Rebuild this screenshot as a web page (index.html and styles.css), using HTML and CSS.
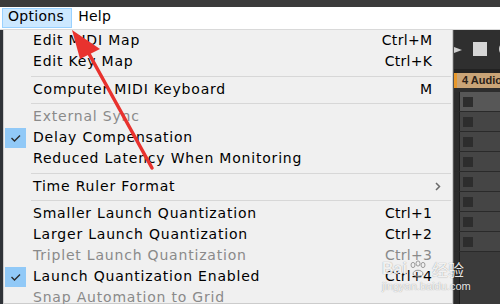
FILE: index.html
```html
<!DOCTYPE html>
<html>
<head>
<meta charset="utf-8">
<link rel="stylesheet" href="styles.css">
</head>
<body>
<div class="topstrip"></div>
<div class="menubar">
  <span class="mb-item active">Options</span>
  <span class="mb-item">Help</span>
</div>
<div class="workspace">
  <div class="leftedge"></div>
  <div class="menu">
    <div class="item"><span class="chk"></span><span class="label">Edit MIDI Map</span><span class="sc">Ctrl+M</span></div>
    <div class="item"><span class="chk"></span><span class="label">Edit Key Map</span><span class="sc">Ctrl+K</span></div>
    <div class="sep"></div>
    <div class="item"><span class="chk"></span><span class="label">Computer MIDI Keyboard</span><span class="sc">M</span></div>
    <div class="sep"></div>
    <div class="item disabled"><span class="chk"></span><span class="label">External Sync</span></div>
    <div class="item checked"><span class="chk"><svg viewBox="0 0 21 20" width="21" height="20"><path d="M6.5 10 L9.5 13 L15 7.5" fill="none" stroke="#2b2b2b" stroke-width="1.4"/></svg></span><span class="label">Delay Compensation</span></div>
    <div class="item"><span class="chk"></span><span class="label">Reduced Latency When Monitoring</span></div>
    <div class="sep"></div>
    <div class="item"><span class="chk"></span><span class="label">Time Ruler Format</span><svg class="sub" viewBox="0 0 6 9" width="6" height="9"><path d="M1 1 L4.5 4.5 L1 8" fill="none" stroke="#6a6a6a" stroke-width="1.5"/></svg></div>
    <div class="sep"></div>
    <div class="item"><span class="chk"></span><span class="label">Smaller Launch Quantization</span><span class="sc">Ctrl+1</span></div>
    <div class="item"><span class="chk"></span><span class="label">Larger Launch Quantization</span><span class="sc">Ctrl+2</span></div>
    <div class="item disabled"><span class="chk"></span><span class="label">Triplet Launch Quantization</span><span class="sc">Ctrl+3</span></div>
    <div class="item checked"><span class="chk"><svg viewBox="0 0 21 20" width="21" height="20"><path d="M6.5 10 L9.5 13 L15 7.5" fill="none" stroke="#2b2b2b" stroke-width="1.4"/></svg></span><span class="label">Launch Quantization Enabled</span><span class="sc">Ctrl+4</span></div>
    <div class="item disabled"><span class="chk"></span><span class="label">Snap Automation to Grid</span></div>
  </div>
  <div class="daw">
    <div class="transport">
      <svg viewBox="0 0 47 39" width="47" height="39">
        <polygon points="-4,15 9,20 -4,25" fill="#cfcfcf"/>
        <rect x="20" y="12" width="14" height="14" fill="#d6d6d6"/>
        <circle cx="53" cy="19" r="7" fill="#d0d0d0"/>
      </svg>
    </div>
    <div class="band"></div>
    <div class="trackhead">4 Audio</div>
    <div class="gap"></div>
    <div class="trow first"><div class="tl"></div><div class="tcell"><div class="sq"></div></div></div>
    <div class="trow"><div class="tl"></div><div class="tcell"><div class="sq"></div></div></div>
    <div class="trow"><div class="tl"></div><div class="tcell"><div class="sq"></div></div></div>
    <div class="trow"><div class="tl"></div><div class="tcell"><div class="sq"></div></div></div>
    <div class="trow"><div class="tl"></div><div class="tcell"><div class="sq"></div></div></div>
    <div class="trow"><div class="tl"></div><div class="tcell"><div class="sq"></div></div></div>
    <div class="trow"><div class="tl"></div><div class="tcell"><div class="sq"></div></div></div>
    <div class="trow"><div class="tl"></div><div class="tcell"><div class="sq"></div></div></div>
    <div class="rest"><div class="tl"></div><div class="restcell"></div></div>
  </div>
</div>
<svg class="arrow" viewBox="0 0 500 304" width="500" height="304">
  <line x1="152" y1="168" x2="88" y2="52" stroke="#e8322e" stroke-width="3.5" stroke-linecap="round"/>
  <polygon points="72,30 100,49 80,59" fill="#e8322e"/>
</svg>
<div class="watermark">
  <div class="wm-top"><span class="wm-bai">Bai</span><svg class="paw" viewBox="0 0 20 18" width="20" height="18"><g fill="none" stroke="#9a9a9a" stroke-width="1"><ellipse cx="5" cy="5" rx="2" ry="2.6"/><ellipse cx="10" cy="3.5" rx="2" ry="2.6"/><ellipse cx="15" cy="5" rx="2" ry="2.6"/><path d="M5 14 C5 9 15 9 15 14 C15 17 5 17 5 14 Z"/></g></svg><span class="wm-cn">经验</span></div>
  <div class="wm-url">jingyan.baidu.com</div>
</div>
</body>
</html>
```
FILE: styles.css
```css
* { box-sizing: border-box; margin: 0; padding: 0; }
html, body { width: 500px; height: 304px; overflow: hidden; }
body {
  background: #3a3a3a;
  font-family: "DejaVu Sans", sans-serif;
  font-size: 14px;
  color: #000;
  position: relative;
}
.topstrip { height: 7px; background: #3b3b3b; }
.menubar {
  height: 23px;
  background: #fff;
  border-bottom: 1px solid #d9d9d9;
  display: flex;
  align-items: flex-start;
  padding-left: 2px;
}
.mb-item {
  margin-top: 1px;
  border: 1px solid transparent;
  padding: 0 7px 3px 5px;
  line-height: 15px;
  white-space: nowrap;
  letter-spacing: 0.3px;
}
.mb-item.active { background: #cce8ff; border-color: #99d1ff; }

.workspace { display: flex; height: 274px; overflow: hidden; }
.leftedge { width: 3px; flex: none; background: #2f3338; }
.menu {
  width: 450px;
  flex: none;
  background: #f0f0f0;
  border: 1px solid #cccccc;
  border-top: 0;
}
.item {
  display: flex;
  align-items: center;
  height: 21px;
  line-height: 21px;
  padding: 0 20px 0 1px;
  white-space: nowrap;
}
.chk { width: 21px; height: 20px; flex: none; display: block; }
.chk svg { display: block; }
.item.checked .chk { background: #91c9f7; }
.label { margin-left: 7px; letter-spacing: 0.8px; }
.sc { margin-left: auto; letter-spacing: 0.3px; margin-right: -0.3px; }
.disabled { color: #8a8a8a; }
.sub { margin-left: auto; margin-right: -9px; display: block; }
.sep { height: 1px; margin: 3.5px 1px 2px 27px; background: #d7d7d7; }

.daw {
  flex: 1;
  display: flex;
  flex-direction: column;
  background: #3b3b3b;
  overflow: hidden;
  border-left: 1px solid #555;
}
.transport { height: 39px; flex: none; background: #2f2f2f; }
.transport svg { display: block; margin-left: -1px; overflow: hidden; }
.band { height: 4px; flex: none; background: #222; }
.trackhead {
  height: 15px;
  flex: none;
  background: #c9a477;
  border-left: 3px solid #e8982a;
  font: bold 11px/15px "Liberation Sans", sans-serif;
  color: #2b2118;
  padding-left: 5px;
  white-space: nowrap;
  overflow: hidden;
}
.gap { height: 4px; flex: none; background: #2d2d2d; }
.trow { height: 20px; flex: none; display: flex; border-bottom: 1px solid #2a2a2a; }
.tl { width: 6px; flex: none; background: #2c2c2c; border-right: 1px solid #1d1d1d; }
.tcell { flex: 1; background: #454545; padding: 5px 0 0 3px; }
.trow.first .tcell { background: #575757; }
.sq { width: 10px; height: 10px; background: #2d2d2d; }
.rest { flex: 1; display: flex; }
.restcell { flex: 1; background: #3b3b3b; }

.arrow { position: absolute; left: 0; top: 0; pointer-events: none; }

.watermark {
  position: absolute;
  left: 382px;
  top: 259px;
  color: rgba(255, 255, 255, 0.9);
  text-shadow: 0 0 1px rgba(0, 0, 0, 0.45);
  pointer-events: none;
}
.wm-top { display: flex; align-items: center; height: 20px; }
.wm-bai { font: bold 16px/20px "Liberation Sans", sans-serif; }
.paw { display: block; margin: 0 4px 0 1px; }
.wm-cn { font: 16px/20px "Noto Sans CJK SC", sans-serif; }
.wm-url { font: 11px/13px "Liberation Sans", sans-serif; margin-top: 1px; }
```
